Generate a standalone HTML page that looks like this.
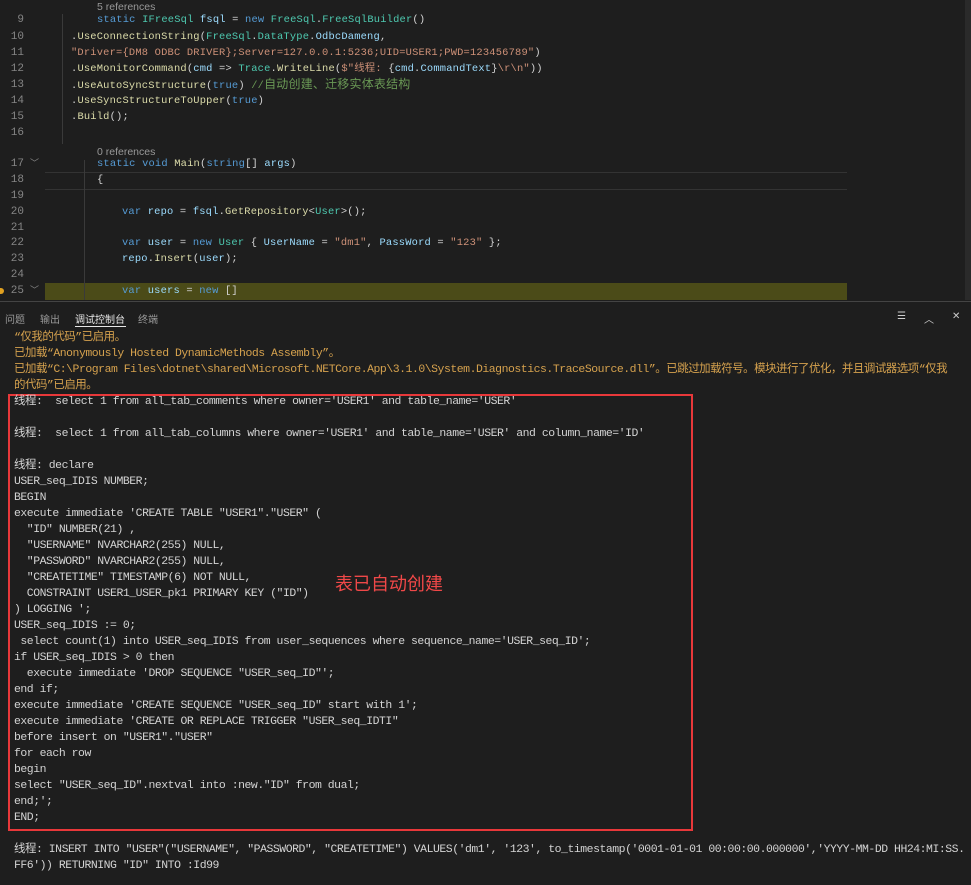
<!DOCTYPE html>
<html><head><meta charset="utf-8"><style>
body{margin:0;width:971px;height:884px;background:#1e1e1e;overflow:hidden;position:relative;font-family:"Liberation Mono","Noto Sans CJK SC",monospace;}
.ed{position:absolute;left:0;top:0;width:971px;height:301px;background:#1e1e1e;}
.ln{position:absolute;left:0;width:24px;text-align:right;color:#858585;font-size:11px;line-height:16px;}
.chev{position:absolute;left:30px;color:#858585;font-size:9px;line-height:16px;}
.c{position:absolute;font-size:10.4px;letter-spacing:0.2px;line-height:16px;color:#d4d4d4;white-space:pre;}
.ref{position:absolute;left:97px;font-family:"Liberation Sans",sans-serif;font-size:10.5px;color:#999;line-height:14px;}
.k{color:#569cd6}.t{color:#4ec9b0}.f{color:#dcdcaa}.s{color:#ce9178}.v{color:#9cdcfe}.cm{color:#6a9955}
.pn{position:absolute;left:0;top:301px;width:971px;height:583px;background:#1e1e1e;border-top:1px solid #444;}
.tab{position:absolute;top:9px;font-family:"Liberation Sans","Noto Sans CJK SC",sans-serif;font-size:10px;color:#999;}
.o{position:absolute;left:14px;font-size:11.45px;letter-spacing:-0.46px;line-height:16px;color:#d4d4d4;white-space:pre;}
.y{color:#d6a24e}
</style></head><body>
<div class="ed">
<div style="position:absolute;left:45px;top:172px;width:802px;height:16px;border-top:1px solid #333;border-bottom:1px solid #333"></div>
<div style="position:absolute;left:45px;top:283px;width:802px;height:17px;background:#4b4b18"></div>
<div style="position:absolute;left:62px;top:14px;width:1px;height:130px;background:#3a3a3a"></div>
<div style="position:absolute;left:84px;top:160px;width:1px;height:140px;background:#3a3a3a"></div>
<div style="position:absolute;left:965px;top:0;width:6px;height:300px;background:#2a2a2a"></div>
<div class="ref" style="top:0">5 references</div>
<div class="ln" style="top:12px">9</div><div class="c" style="left:97px;top:12px"><span class="k">static</span> <span class="t">IFreeSql</span> <span class="v">fsql</span> = <span class="k">new</span> <span class="t">FreeSql</span>.<span class="t">FreeSqlBuilder</span>()</div>
<div class="ln" style="top:29px">10</div><div class="c" style="left:71px;top:29px">.<span class="f">UseConnectionString</span>(<span class="t">FreeSql</span>.<span class="t">DataType</span>.<span class="v">OdbcDameng</span>,</div>
<div class="ln" style="top:45px">11</div><div class="c" style="left:71px;top:45px"><span class="s">"Driver={DM8 ODBC DRIVER};Server=127.0.0.1:5236;UID=USER1;PWD=123456789"</span>)</div>
<div class="ln" style="top:61px">12</div><div class="c" style="left:71px;top:61px">.<span class="f">UseMonitorCommand</span>(<span class="v">cmd</span> =&gt; <span class="t">Trace</span>.<span class="f">WriteLine</span>(<span class="s">$"线程: </span>{<span class="v">cmd</span>.<span class="v">CommandText</span>}<span class="s">\r\n"</span>))</div>
<div class="ln" style="top:77px">13</div><div class="c" style="left:71px;top:77px">.<span class="f">UseAutoSyncStructure</span>(<span class="k">true</span>) <span class="cm">//<span style="font-size:12px">自动创建、迁移实体表结构</span></span></div>
<div class="ln" style="top:93px">14</div><div class="c" style="left:71px;top:93px">.<span class="f">UseSyncStructureToUpper</span>(<span class="k">true</span>)</div>
<div class="ln" style="top:109px">15</div><div class="c" style="left:71px;top:109px">.<span class="f">Build</span>();</div>
<div class="ln" style="top:125px">16</div>
<div class="ref" style="top:145px">0 references</div>
<div class="ln" style="top:156px">17</div><div class="chev" style="top:156px">﹀</div><div class="c" style="left:97px;top:156px"><span class="k">static</span> <span class="k">void</span> <span class="f">Main</span>(<span class="k">string</span>[] <span class="v">args</span>)</div>
<div class="ln" style="top:172px">18</div><div class="c" style="left:97px;top:172px">{</div>
<div class="ln" style="top:188px">19</div>
<div class="ln" style="top:204px">20</div><div class="c" style="left:122px;top:204px"><span class="k">var</span> <span class="v">repo</span> = <span class="v">fsql</span>.<span class="f">GetRepository</span>&lt;<span class="t">User</span>&gt;();</div>
<div class="ln" style="top:220px">21</div>
<div class="ln" style="top:235px">22</div><div class="c" style="left:122px;top:235px"><span class="k">var</span> <span class="v">user</span> = <span class="k">new</span> <span class="t">User</span> { <span class="v">UserName</span> = <span class="s">"dm1"</span>, <span class="v">PassWord</span> = <span class="s">"123"</span> };</div>
<div class="ln" style="top:251px">23</div><div class="c" style="left:122px;top:251px"><span class="v">repo</span>.<span class="f">Insert</span>(<span class="v">user</span>);</div>
<div class="ln" style="top:267px">24</div>
<div class="ln" style="top:283px">25</div><div class="chev" style="top:283px">﹀</div><div class="c" style="left:122px;top:283px"><span class="k">var</span> <span class="v">users</span> = <span class="k">new</span> []</div>
<div style="position:absolute;left:0;top:288px;width:4px;height:6px;background:#e0a020;border-radius:0 3px 3px 0"></div>
</div>
<div class="pn">
<div class="tab" style="left:5px">问题</div><div class="tab" style="left:40px">输出</div>
<div class="tab" style="left:75px;color:#e7e7e7">调试控制台</div>
<div style="position:absolute;left:75px;top:24px;width:51px;height:1px;background:#e7e7e7"></div>
<div class="tab" style="left:138px">终端</div>
<div class="tab" style="left:897px;color:#ccc">☰</div><div class="tab" style="left:924px;color:#ccc">︿</div><div class="tab" style="left:952px;color:#ccc">✕</div>
</div>
<div class="o y" style="top:330px">“仅我的代码”已启用。</div>
<div class="o y" style="top:346px">已加载“Anonymously Hosted DynamicMethods Assembly”。</div>
<div class="o y" style="top:362px">已加载“C:\Program Files\dotnet\shared\Microsoft.NETCore.App\3.1.0\System.Diagnostics.TraceSource.dll”。已跳过加载符号。模块进行了优化，并且调试器选项“仅我</div>
<div class="o y" style="top:378px">的代码”已启用。</div>
<div style="position:absolute;left:8px;top:394px;width:681px;height:433px;border:2px solid #e8383a"></div>
<div class="o" style="top:394px">线程:  select 1 from all_tab_comments where owner='USER1' and table_name='USER'

线程:  select 1 from all_tab_columns where owner='USER1' and table_name='USER' and column_name='ID'

线程: declare
USER_seq_IDIS NUMBER;
BEGIN
execute immediate 'CREATE TABLE "USER1"."USER" (
  "ID" NUMBER(21) ,
  "USERNAME" NVARCHAR2(255) NULL,
  "PASSWORD" NVARCHAR2(255) NULL,
  "CREATETIME" TIMESTAMP(6) NOT NULL,
  CONSTRAINT USER1_USER_pk1 PRIMARY KEY ("ID")
) LOGGING ';
USER_seq_IDIS := 0;
 select count(1) into USER_seq_IDIS from user_sequences where sequence_name='USER_seq_ID';
if USER_seq_IDIS &gt; 0 then
  execute immediate 'DROP SEQUENCE "USER_seq_ID"';
end if;
execute immediate 'CREATE SEQUENCE "USER_seq_ID" start with 1';
execute immediate 'CREATE OR REPLACE TRIGGER "USER_seq_IDTI"
before insert on "USER1"."USER"
for each row
begin
select "USER_seq_ID".nextval into :new."ID" from dual;
end;';
END;

线程: INSERT INTO "USER"("USERNAME", "PASSWORD", "CREATETIME") VALUES('dm1', '123', to_timestamp('0001-01-01 00:00:00.000000','YYYY-MM-DD HH24:MI:SS.
FF6')) RETURNING "ID" INTO :Id99</div>
<div style="position:absolute;left:335px;top:570px;font-family:'Noto Sans CJK SC',sans-serif;font-size:18px;color:#f04848">表已自动创建</div>
</body></html>
